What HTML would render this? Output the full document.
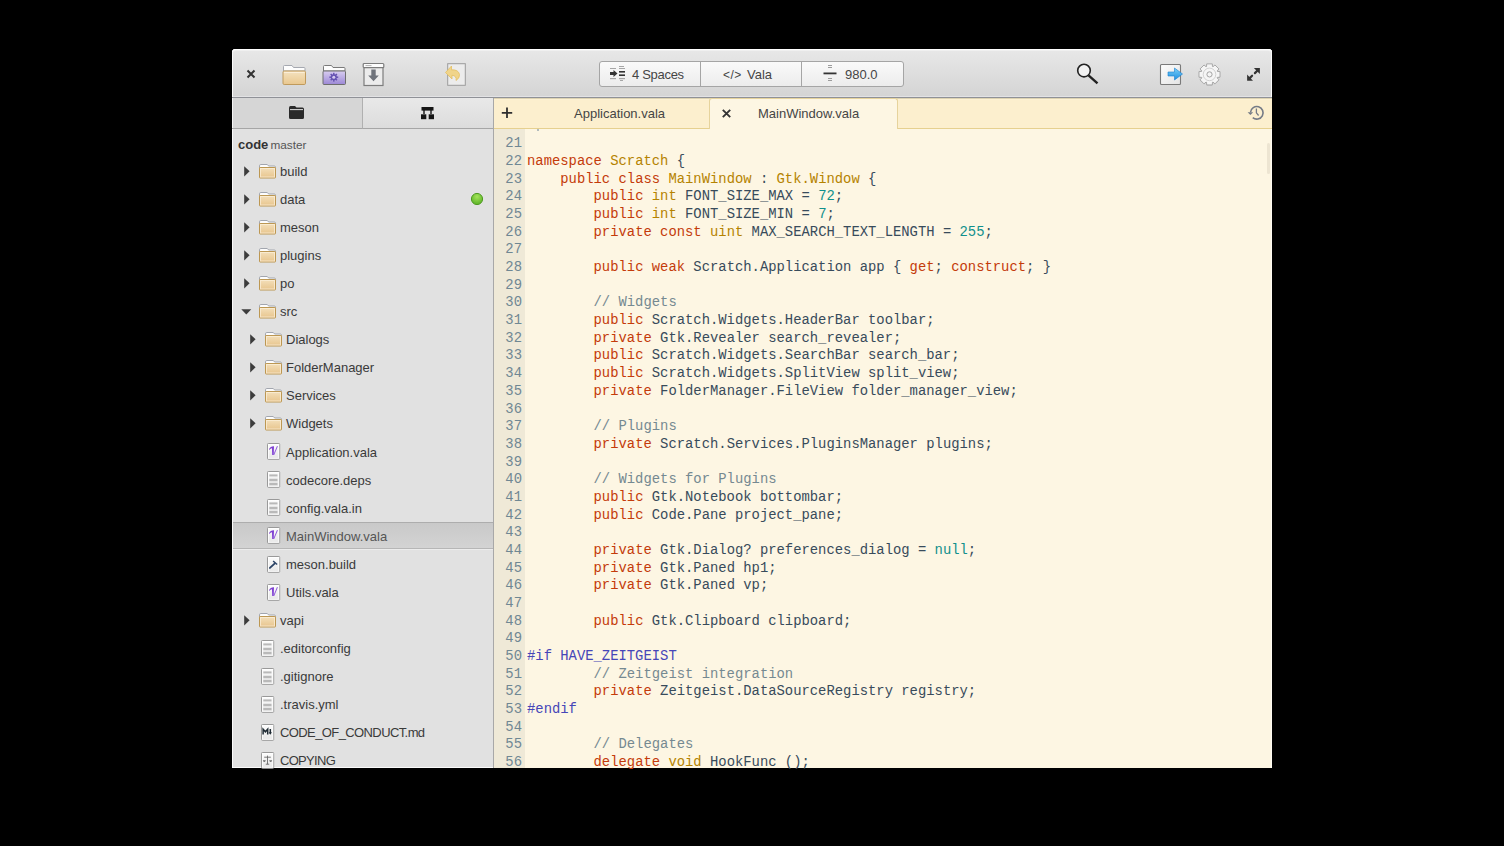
<!DOCTYPE html>
<html><head><meta charset="utf-8">
<style>
*{margin:0;padding:0;box-sizing:border-box}
html,body{width:1504px;height:846px;background:#000;overflow:hidden}
body{position:relative;font-family:"Liberation Sans",sans-serif;color:#333}
.abs{position:absolute}
#win{position:absolute;left:232px;top:49px;width:1040px;height:719px;border-radius:4px 4px 0 0;overflow:hidden;background:#e1e1e1}
#hb{position:absolute;left:232px;top:49px;width:1040px;height:49px;border-radius:4px 4px 0 0;background:linear-gradient(#e8e8e8,#d4d4d4);border-bottom:1px solid #8f9197;box-shadow:inset 0 1px 0 #fff, inset 0 2px 0 #f0f0f0, inset 1px 0 0 #fbfbfb, inset -1px 0 0 #fbfbfb, inset 0 -1px 0 #e2e2e4}
#side{position:absolute;left:232px;top:98px;width:262px;height:670px;background:#e1e1e1;border-right:1px solid #a8a8a8;box-shadow:inset 1px 0 0 #fbfbfb, inset 0 -1px 0 #fbfbfb}
#stab1{position:absolute;left:232px;top:98px;width:130px;height:31px;background:#d6d6d6;border-bottom:1px solid #a6a6a6;box-shadow:inset 1px 0 0 #f4f4f4}
#stab2{position:absolute;left:362px;top:98px;width:131px;height:31px;background:linear-gradient(#e9e9e9,#dcdcdc);border-bottom:1px solid #a6a6a6;border-left:1px solid #b0b0b0}
#editor{position:absolute;left:494px;top:98px;width:778px;height:670px;background:#fdf6e3}
#etabs{position:absolute;left:494px;top:98px;width:778px;height:31px;background:#fcefce;border-bottom:1px solid #e6d08f;box-shadow:inset 0 1px 0 #ddd3b2, inset 0 2px 0 #fdf1d3}
#atab{position:absolute;left:709px;top:98px;width:189px;height:31px;background:#fdf6e3;border:1px solid #e6d39c;border-bottom:none;border-radius:3px 3px 0 0}
#gutter{position:absolute;left:494px;top:129px;width:31px;height:639px;background:#efe9d7}
.cl{position:absolute;font-family:"Liberation Mono",monospace;font-size:13.86px;white-space:pre;line-height:17.68px;height:17.68px}
.ln{left:494px;width:28px;text-align:right;color:#6f8793}
.cd{left:527px}
.sl{font-size:13px;line-height:18px;white-space:nowrap;color:#3a3a3a}
.sel{color:#555}
.selrow{background:linear-gradient(#c9c9c9,#d3d3d3);border-top:1px solid #adadad;border-bottom:1px solid #b6b6b6;box-shadow:0 1px 0 #ececec}
.btn{position:absolute;top:61px;height:26px;background:linear-gradient(#fafafa,#ececec);border:1px solid #a5a5a5}
.bt{position:absolute;font-size:13px;line-height:16px;color:#454545;white-space:nowrap}
</style></head><body>
<svg width="0" height="0" style="position:absolute"><defs>
<linearGradient id="fgrad" x1="0" y1="0" x2="0" y2="1"><stop offset="0" stop-color="#f4e0bb"/><stop offset="1" stop-color="#e7c48c"/></linearGradient>
<linearGradient id="dgrad" x1="0" y1="0" x2="0" y2="1"><stop offset="0" stop-color="#fdfdfd"/><stop offset="1" stop-color="#e6e6e6"/></linearGradient>
</defs></svg>
<div id="win"></div>
<div id="hb"></div>
<div id="side"></div>
<div id="stab1"></div>
<div id="stab2"></div>
<div id="editor"></div>
<div id="etabs"></div>
<div id="atab"></div>
<div id="gutter"></div>

<!-- headerbar icons -->
<svg class="abs" style="left:246px;top:69px" width="10" height="10" viewBox="0 0 10 10"><path d="M1.5 1.5 L8.5 8.5 M8.5 1.5 L1.5 8.5" stroke="#333" stroke-width="2"/></svg>
<!-- open folder -->
<svg class="abs" style="left:282px;top:64px" width="25" height="22" viewBox="0 0 25 22">
<defs><linearGradient id="hf1" x1="0" y1="0" x2="0" y2="1"><stop offset="0" stop-color="#f4e2c0"/><stop offset="1" stop-color="#e9c78e"/></linearGradient></defs>
<path d="M1.5 7 V2.5 Q1.5 1.5 2.5 1.5 H10 L11.5 3.5 H22 Q23 3.5 23 4.5 V7Z" fill="#fdfdfd" stroke="#a5a8b0" stroke-width="1"/>
<rect x="1" y="7" width="22.5" height="13.5" rx="1.2" fill="url(#hf1)" stroke="#bf9a5c" stroke-width="1"/>
<rect x="2" y="8" width="20.5" height="1" fill="#fbeed8"/>
</svg>
<!-- purple project folder -->
<svg class="abs" style="left:322px;top:64px" width="25" height="22" viewBox="0 0 25 22">
<defs><linearGradient id="hf2" x1="0" y1="0" x2="0" y2="1"><stop offset="0" stop-color="#d8cdf0"/><stop offset="1" stop-color="#9c88d6"/></linearGradient></defs>
<path d="M1.5 7 V2.5 Q1.5 1.5 2.5 1.5 H9.5 L11 3.5 H22 Q23 3.5 23 4.5 V7Z" fill="#fdfdfd" stroke="#7a7a7a" stroke-width="1"/>
<rect x="1" y="7" width="22.5" height="13.5" rx="1" fill="url(#hf2)" stroke="#6e6e6e" stroke-width="1"/>
<g transform="translate(11.8,13.2)" fill="#6653b2"><circle r="3"/><rect x="-0.75" y="-4.4" width="1.5" height="8.8"/><rect x="-0.75" y="-4.4" width="1.5" height="8.8" transform="rotate(45)"/><rect x="-0.75" y="-4.4" width="1.5" height="8.8" transform="rotate(90)"/><rect x="-0.75" y="-4.4" width="1.5" height="8.8" transform="rotate(135)"/><circle r="1.5" fill="#d4c9ef"/></g>
</svg>
<!-- save -->
<svg class="abs" style="left:362px;top:62px" width="23" height="25" viewBox="0 0 23 25">
<rect x="2" y="4" width="19" height="19.5" fill="#ececec" stroke="#7d7d7d" stroke-width="1.2"/>
<rect x="1.2" y="1.5" width="20.6" height="4.2" rx="1" fill="#fdfdfd" stroke="#7d7d7d" stroke-width="1.2"/>
<path d="M3.5 3.6 H9.5" stroke="#9a9a9a" stroke-width="0.8"/>
<path d="M9.3 7.5 H13.7 V13.5 H16.8 L11.5 19.3 L6.2 13.5 H9.3Z" fill="#6f737b"/>
</svg>
<!-- revert (insensitive) -->
<svg class="abs" style="left:444px;top:62px" width="24" height="25" viewBox="0 0 24 25">
<rect x="3.7" y="1.7" width="17.6" height="21.6" fill="#ececec" stroke="#9c9c9c" stroke-width="1"/>
<path d="M1.5 10.5 L7.5 4 V7.8 Q14.5 7.5 15.5 12.5 Q16 16 12 18.5 Q13 14 8 13.2 V17Z" fill="#f0d48a" stroke="#e3bf62" stroke-width="0.8"/>
</svg>

<!-- linked buttons -->
<div class="btn" style="left:599px;width:102px;border-radius:3px 0 0 3px"></div>
<div class="btn" style="left:700px;width:102px;border-left:1px solid #a5a5a5"></div>
<div class="btn" style="left:801px;width:103px;border-radius:0 3px 3px 0"></div>
<svg class="abs" style="left:609px;top:65px" width="18" height="18" viewBox="0 0 18 18">
<g fill="#a6a6a6"><rect x="1" y="3" width="6" height="1"/><rect x="10" y="1" width="5" height="1"/><rect x="10" y="3" width="6" height="1"/><rect x="1" y="13" width="6" height="1.2"/><rect x="10" y="13" width="6" height="1.2"/><rect x="11" y="15" width="3" height="1"/></g>
<path d="M1 7 H4.5 V5 L8.5 8.5 L4.5 12 V10 H1Z" fill="#333"/>
<g fill="#333"><rect x="10" y="6" width="6" height="1.6"/><rect x="10" y="9.4" width="6" height="1.6"/></g>
</svg>
<div class="bt" style="left:632px;top:67px;letter-spacing:-0.3px">4 Spaces</div>
<div class="bt" style="left:723px;top:67px;font-size:12px;letter-spacing:0.5px">&lt;/&gt;</div>
<div class="bt" style="left:747px;top:67px">Vala</div>
<svg class="abs" style="left:823px;top:64px" width="14" height="20" viewBox="0 0 14 20">
<g fill="#9c9c9c"><rect x="5" y="1" width="4" height="1"/><rect x="5" y="3" width="4" height="1"/><rect x="5" y="14" width="4" height="1"/><rect x="5" y="16" width="4" height="1"/></g>
<rect x="0.5" y="8.5" width="13" height="1.8" fill="#333"/>
</svg>
<div class="bt" style="left:845px;top:67px">980.0</div>

<!-- search -->
<svg class="abs" style="left:1075px;top:62px" width="26" height="25" viewBox="0 0 26 25">
<circle cx="9" cy="8.6" r="6.3" fill="#f2f2f2" stroke="#222" stroke-width="1.6"/>
<path d="M13.5 13.3 L22.5 21.3" stroke="#222" stroke-width="2.4" stroke-linecap="butt"/>
</svg>
<!-- export -->
<svg class="abs" style="left:1159px;top:63px" width="26" height="23" viewBox="0 0 26 23">
<defs><linearGradient id="eg" x1="0" y1="0" x2="1" y2="1"><stop offset="0" stop-color="#fdfdfd"/><stop offset="1" stop-color="#e4e4e4"/></linearGradient>
<linearGradient id="ag" x1="0" y1="0" x2="0" y2="1"><stop offset="0" stop-color="#7ad0f8"/><stop offset="1" stop-color="#1f8fe0"/></linearGradient></defs>
<rect x="1.5" y="1.5" width="20" height="20" rx="1" fill="url(#eg)" stroke="#7a7a7a" stroke-width="1.1"/>
<path d="M9 9 H15.5 V5 L23.5 11 L15.5 17 V13 H9Z" fill="url(#ag)" stroke="#1a7fd0" stroke-width="0.6"/>
</svg>
<!-- gear -->
<svg class="abs" style="left:1197px;top:62px" width="25" height="26" viewBox="0 0 25 26">
<g transform="translate(12.5,12.4)">
<path d="M-2.96 -7.86 L-2.80 -10.53 L2.80 -10.53 L2.96 -7.86 L3.47 -7.65 L5.47 -9.43 L9.43 -5.47 L7.65 -3.47 L7.86 -2.96 L10.53 -2.80 L10.53 2.80 L7.86 2.96 L7.65 3.47 L9.43 5.47 L5.47 9.43 L3.47 7.65 L2.96 7.86 L2.80 10.53 L-2.80 10.53 L-2.96 7.86 L-3.47 7.65 L-5.47 9.43 L-9.43 5.47 L-7.65 3.47 L-7.86 2.96 L-10.53 2.80 L-10.53 -2.80 L-7.86 -2.96 L-7.65 -3.47 L-9.43 -5.47 L-5.47 -9.43 L-3.47 -7.65Z" fill="#000" fill-opacity="0.06" transform="translate(0,1)"/>
<path d="M-2.96 -7.86 L-2.80 -10.53 L2.80 -10.53 L2.96 -7.86 L3.47 -7.65 L5.47 -9.43 L9.43 -5.47 L7.65 -3.47 L7.86 -2.96 L10.53 -2.80 L10.53 2.80 L7.86 2.96 L7.65 3.47 L9.43 5.47 L5.47 9.43 L3.47 7.65 L2.96 7.86 L2.80 10.53 L-2.80 10.53 L-2.96 7.86 L-3.47 7.65 L-5.47 9.43 L-9.43 5.47 L-7.65 3.47 L-7.86 2.96 L-10.53 2.80 L-10.53 -2.80 L-7.86 -2.96 L-7.65 -3.47 L-9.43 -5.47 L-5.47 -9.43 L-3.47 -7.65Z" fill="#f5f5f5" stroke="#a2a2a2" stroke-width="0.9" stroke-linejoin="round"/>
<circle r="6.3" fill="none" stroke="#cdcdcd" stroke-width="0.9"/>
<circle r="2.6" fill="#f5f5f5" stroke="#9a9a9a" stroke-width="0.9"/>
</g>
</svg>
<!-- fullscreen -->
<svg class="abs" style="left:1244px;top:66px" width="18" height="18" viewBox="0 0 18 18">
<g fill="#333"><path d="M9.9 2.1 H15.9 V7.9Z"/><path d="M3.1 8.5 V14.75 H9Z"/></g>
<g stroke="#333" stroke-width="2.2" stroke-linecap="round"><path d="M13.3 4.7 L10.9 7.1"/><path d="M5.7 12.1 L8.1 9.7"/></g>
</svg>
<!-- sidebar tab icons -->
<svg class="abs" style="left:288px;top:105px" width="17" height="15" viewBox="0 0 17 15">
<path d="M1 3 Q1 1 2.5 1 H7 L8.5 2.5 H14.5 Q16 2.5 16 4 V12.5 Q16 14 14.5 14 H2.5 Q1 14 1 12.5Z" fill="#2a2a2a"/>
<rect x="2" y="4.2" width="13" height="0.9" fill="#f0f0f0"/>
</svg>
<svg class="abs" style="left:420px;top:106px" width="15" height="14" viewBox="0 0 15 14">
<g fill="#151515"><rect x="1.5" y="1" width="12" height="3.6"/><rect x="3.3" y="4" width="1.4" height="4"/><rect x="10.3" y="4" width="1.4" height="4"/><rect x="1" y="8.3" width="5.3" height="4.9"/><rect x="8.7" y="8.3" width="5.3" height="4.9"/></g>
</svg>

<!-- tabs -->
<svg class="abs" style="left:500px;top:106px" width="13" height="13" viewBox="0 0 13 13"><path d="M7 1.5 V12 M1.8 6.8 H12.2" stroke="#2f2f2f" stroke-width="1.8"/></svg>
<div class="bt" style="left:574px;top:106px">Application.vala</div>
<svg class="abs" style="left:721px;top:108px" width="11" height="11" viewBox="0 0 11 11"><path d="M1.8 1.8 L9.2 9.2 M9.2 1.8 L1.8 9.2" stroke="#333" stroke-width="1.9"/></svg>
<div class="bt" style="left:758px;top:106px">MainWindow.vala</div>
<!-- history -->
<svg class="abs" style="left:1244px;top:102px" width="22" height="20" viewBox="0 0 22 20">
<path d="M6.50 10.20 A6.3 6.3 0 1 1 8.75 15.63" fill="none" stroke="#757b86" stroke-width="1.6"/>
<path d="M3.60 10.20 L9.20 10.20 L6.40 13.00Z" fill="#757b86"/>
<path d="M12.40 6.40 V10.80 L14.60 13.50" fill="none" stroke="#757b86" stroke-width="1.3"/>
</svg>
<!-- scrollbar hint -->
<div class="abs" style="left:1267px;top:143px;width:3px;height:31px;background:#ede5d2;border-radius:2px"></div>
<div class="abs" style="left:1271px;top:129px;width:1px;height:639px;background:#fffcf3"></div>
<div class="abs" style="left:537px;top:129px;width:2px;height:2px;background:#9aa8b0;border-radius:1px"></div>

<!-- sidebar -->
<div class="abs sl" style="left:238px;top:135.5px"><b style="color:#333">code</b> <span style="font-size:11.8px;color:#555;margin-left:-1.5px">master</span></div>
<svg class="abs" style="left:244px;top:165.8px" width="7" height="11" viewBox="0 0 7 11"><path d="M0.2 0.2 L5.6 5.2 L0.2 10.4Z" fill="#3c3c3c"/></svg>
<svg class="abs" style="left:259px;top:164.0px" width="18" height="15" viewBox="0 0 18 15">
<path d="M0.5 4 V1.8 Q0.5 0.5 1.8 0.5 H8.3 L9.6 2 H15.3 Q16.5 2 16.5 3.2 V4" fill="#fdfdfd" stroke="#a2a6ae" stroke-width="1"/>
<rect x="0.5" y="3.5" width="16" height="10.5" rx="0.6" fill="url(#fgrad)" stroke="#bc9752" stroke-width="1"/>
<rect x="1.5" y="4.5" width="14" height="8.5" fill="none" stroke="#fbefd9" stroke-opacity="0.75" stroke-width="1"/>
</svg>
<div class="abs sl" style="left:280px;top:163.00px;">build</div>
<svg class="abs" style="left:244px;top:193.85000000000002px" width="7" height="11" viewBox="0 0 7 11"><path d="M0.2 0.2 L5.6 5.2 L0.2 10.4Z" fill="#3c3c3c"/></svg>
<svg class="abs" style="left:259px;top:192.05px" width="18" height="15" viewBox="0 0 18 15">
<path d="M0.5 4 V1.8 Q0.5 0.5 1.8 0.5 H8.3 L9.6 2 H15.3 Q16.5 2 16.5 3.2 V4" fill="#fdfdfd" stroke="#a2a6ae" stroke-width="1"/>
<rect x="0.5" y="3.5" width="16" height="10.5" rx="0.6" fill="url(#fgrad)" stroke="#bc9752" stroke-width="1"/>
<rect x="1.5" y="4.5" width="14" height="8.5" fill="none" stroke="#fbefd9" stroke-opacity="0.75" stroke-width="1"/>
</svg>
<div class="abs sl" style="left:280px;top:191.05px;">data</div>
<svg class="abs" style="left:244px;top:221.9px" width="7" height="11" viewBox="0 0 7 11"><path d="M0.2 0.2 L5.6 5.2 L0.2 10.4Z" fill="#3c3c3c"/></svg>
<svg class="abs" style="left:259px;top:220.1px" width="18" height="15" viewBox="0 0 18 15">
<path d="M0.5 4 V1.8 Q0.5 0.5 1.8 0.5 H8.3 L9.6 2 H15.3 Q16.5 2 16.5 3.2 V4" fill="#fdfdfd" stroke="#a2a6ae" stroke-width="1"/>
<rect x="0.5" y="3.5" width="16" height="10.5" rx="0.6" fill="url(#fgrad)" stroke="#bc9752" stroke-width="1"/>
<rect x="1.5" y="4.5" width="14" height="8.5" fill="none" stroke="#fbefd9" stroke-opacity="0.75" stroke-width="1"/>
</svg>
<div class="abs sl" style="left:280px;top:219.10px;">meson</div>
<svg class="abs" style="left:244px;top:249.95000000000002px" width="7" height="11" viewBox="0 0 7 11"><path d="M0.2 0.2 L5.6 5.2 L0.2 10.4Z" fill="#3c3c3c"/></svg>
<svg class="abs" style="left:259px;top:248.15px" width="18" height="15" viewBox="0 0 18 15">
<path d="M0.5 4 V1.8 Q0.5 0.5 1.8 0.5 H8.3 L9.6 2 H15.3 Q16.5 2 16.5 3.2 V4" fill="#fdfdfd" stroke="#a2a6ae" stroke-width="1"/>
<rect x="0.5" y="3.5" width="16" height="10.5" rx="0.6" fill="url(#fgrad)" stroke="#bc9752" stroke-width="1"/>
<rect x="1.5" y="4.5" width="14" height="8.5" fill="none" stroke="#fbefd9" stroke-opacity="0.75" stroke-width="1"/>
</svg>
<div class="abs sl" style="left:280px;top:247.15px;">plugins</div>
<svg class="abs" style="left:244px;top:278.0px" width="7" height="11" viewBox="0 0 7 11"><path d="M0.2 0.2 L5.6 5.2 L0.2 10.4Z" fill="#3c3c3c"/></svg>
<svg class="abs" style="left:259px;top:276.2px" width="18" height="15" viewBox="0 0 18 15">
<path d="M0.5 4 V1.8 Q0.5 0.5 1.8 0.5 H8.3 L9.6 2 H15.3 Q16.5 2 16.5 3.2 V4" fill="#fdfdfd" stroke="#a2a6ae" stroke-width="1"/>
<rect x="0.5" y="3.5" width="16" height="10.5" rx="0.6" fill="url(#fgrad)" stroke="#bc9752" stroke-width="1"/>
<rect x="1.5" y="4.5" width="14" height="8.5" fill="none" stroke="#fbefd9" stroke-opacity="0.75" stroke-width="1"/>
</svg>
<div class="abs sl" style="left:280px;top:275.20px;">po</div>
<svg class="abs" style="left:241.3px;top:309.05px" width="11" height="7" viewBox="0 0 11 7"><path d="M0.3 0.3 L10.3 0.3 L5.3 5.6Z" fill="#3c3c3c"/></svg>
<svg class="abs" style="left:259px;top:304.25px" width="18" height="15" viewBox="0 0 18 15">
<path d="M0.5 4 V1.8 Q0.5 0.5 1.8 0.5 H8.3 L9.6 2 H15.3 Q16.5 2 16.5 3.2 V4" fill="#fdfdfd" stroke="#a2a6ae" stroke-width="1"/>
<rect x="0.5" y="3.5" width="16" height="10.5" rx="0.6" fill="url(#fgrad)" stroke="#bc9752" stroke-width="1"/>
<rect x="1.5" y="4.5" width="14" height="8.5" fill="none" stroke="#fbefd9" stroke-opacity="0.75" stroke-width="1"/>
</svg>
<div class="abs sl" style="left:280px;top:303.25px;">src</div>
<svg class="abs" style="left:250px;top:334.1px" width="7" height="11" viewBox="0 0 7 11"><path d="M0.2 0.2 L5.6 5.2 L0.2 10.4Z" fill="#3c3c3c"/></svg>
<svg class="abs" style="left:265px;top:332.3px" width="18" height="15" viewBox="0 0 18 15">
<path d="M0.5 4 V1.8 Q0.5 0.5 1.8 0.5 H8.3 L9.6 2 H15.3 Q16.5 2 16.5 3.2 V4" fill="#fdfdfd" stroke="#a2a6ae" stroke-width="1"/>
<rect x="0.5" y="3.5" width="16" height="10.5" rx="0.6" fill="url(#fgrad)" stroke="#bc9752" stroke-width="1"/>
<rect x="1.5" y="4.5" width="14" height="8.5" fill="none" stroke="#fbefd9" stroke-opacity="0.75" stroke-width="1"/>
</svg>
<div class="abs sl" style="left:286px;top:331.30px;">Dialogs</div>
<svg class="abs" style="left:250px;top:362.15000000000003px" width="7" height="11" viewBox="0 0 7 11"><path d="M0.2 0.2 L5.6 5.2 L0.2 10.4Z" fill="#3c3c3c"/></svg>
<svg class="abs" style="left:265px;top:360.35px" width="18" height="15" viewBox="0 0 18 15">
<path d="M0.5 4 V1.8 Q0.5 0.5 1.8 0.5 H8.3 L9.6 2 H15.3 Q16.5 2 16.5 3.2 V4" fill="#fdfdfd" stroke="#a2a6ae" stroke-width="1"/>
<rect x="0.5" y="3.5" width="16" height="10.5" rx="0.6" fill="url(#fgrad)" stroke="#bc9752" stroke-width="1"/>
<rect x="1.5" y="4.5" width="14" height="8.5" fill="none" stroke="#fbefd9" stroke-opacity="0.75" stroke-width="1"/>
</svg>
<div class="abs sl" style="left:286px;top:359.35px;">FolderManager</div>
<svg class="abs" style="left:250px;top:390.2px" width="7" height="11" viewBox="0 0 7 11"><path d="M0.2 0.2 L5.6 5.2 L0.2 10.4Z" fill="#3c3c3c"/></svg>
<svg class="abs" style="left:265px;top:388.4px" width="18" height="15" viewBox="0 0 18 15">
<path d="M0.5 4 V1.8 Q0.5 0.5 1.8 0.5 H8.3 L9.6 2 H15.3 Q16.5 2 16.5 3.2 V4" fill="#fdfdfd" stroke="#a2a6ae" stroke-width="1"/>
<rect x="0.5" y="3.5" width="16" height="10.5" rx="0.6" fill="url(#fgrad)" stroke="#bc9752" stroke-width="1"/>
<rect x="1.5" y="4.5" width="14" height="8.5" fill="none" stroke="#fbefd9" stroke-opacity="0.75" stroke-width="1"/>
</svg>
<div class="abs sl" style="left:286px;top:387.40px;">Services</div>
<svg class="abs" style="left:250px;top:418.25000000000006px" width="7" height="11" viewBox="0 0 7 11"><path d="M0.2 0.2 L5.6 5.2 L0.2 10.4Z" fill="#3c3c3c"/></svg>
<svg class="abs" style="left:265px;top:416.45000000000005px" width="18" height="15" viewBox="0 0 18 15">
<path d="M0.5 4 V1.8 Q0.5 0.5 1.8 0.5 H8.3 L9.6 2 H15.3 Q16.5 2 16.5 3.2 V4" fill="#fdfdfd" stroke="#a2a6ae" stroke-width="1"/>
<rect x="0.5" y="3.5" width="16" height="10.5" rx="0.6" fill="url(#fgrad)" stroke="#bc9752" stroke-width="1"/>
<rect x="1.5" y="4.5" width="14" height="8.5" fill="none" stroke="#fbefd9" stroke-opacity="0.75" stroke-width="1"/>
</svg>
<div class="abs sl" style="left:286px;top:415.45px;">Widgets</div>
<svg class="abs" style="left:267px;top:443.3px" width="14" height="17" viewBox="0 0 14 17">
<rect x="0.5" y="0.5" width="12.2" height="15.8" rx="0.8" fill="url(#dgrad)" stroke="#999"/><rect x="1.5" y="1.5" width="10.2" height="13.8" fill="none" stroke="#fff" stroke-opacity="0.8"/><path d="M1.9 6.4 Q3.4 3.2 7 3.3 L6.7 11.9 L5.2 11.9 L5.0 5.2 Q3.8 5.0 2.4 6.8Z" fill="#7e3fd2"/><path d="M6.2 11.9 L10 3 L10.9 3.2 L7.2 11.9Z" fill="#8f55dc"/></svg>
<div class="abs sl" style="left:286px;top:443.50px;">Application.vala</div>
<svg class="abs" style="left:267px;top:471.35px" width="14" height="17" viewBox="0 0 14 17">
<rect x="0.5" y="0.5" width="12.2" height="15.8" rx="0.8" fill="url(#dgrad)" stroke="#999"/><rect x="1.5" y="1.5" width="10.2" height="13.8" fill="none" stroke="#fff" stroke-opacity="0.8"/><g fill="#b9b9b9"><rect x="2.3" y="3.4" width="8.2" height="2"/><rect x="2.3" y="7.8" width="8.2" height="2.4"/><rect x="2.3" y="11.9" width="8.2" height="2.3"/></g></svg>
<div class="abs sl" style="left:286px;top:471.55px;">codecore.deps</div>
<svg class="abs" style="left:267px;top:499.40000000000003px" width="14" height="17" viewBox="0 0 14 17">
<rect x="0.5" y="0.5" width="12.2" height="15.8" rx="0.8" fill="url(#dgrad)" stroke="#999"/><rect x="1.5" y="1.5" width="10.2" height="13.8" fill="none" stroke="#fff" stroke-opacity="0.8"/><g fill="#b9b9b9"><rect x="2.3" y="3.4" width="8.2" height="2"/><rect x="2.3" y="7.8" width="8.2" height="2.4"/><rect x="2.3" y="11.9" width="8.2" height="2.3"/></g></svg>
<div class="abs sl" style="left:286px;top:499.60px;">config.vala.in</div>
<div class="abs selrow" style="left:233px;top:522px;width:260px;height:27px"></div>
<svg class="abs" style="left:267px;top:527.45px" width="14" height="17" viewBox="0 0 14 17">
<rect x="0.5" y="0.5" width="12.2" height="15.8" rx="0.8" fill="url(#dgrad)" stroke="#999"/><rect x="1.5" y="1.5" width="10.2" height="13.8" fill="none" stroke="#fff" stroke-opacity="0.8"/><path d="M1.9 6.4 Q3.4 3.2 7 3.3 L6.7 11.9 L5.2 11.9 L5.0 5.2 Q3.8 5.0 2.4 6.8Z" fill="#7e3fd2"/><path d="M6.2 11.9 L10 3 L10.9 3.2 L7.2 11.9Z" fill="#8f55dc"/></svg>
<div class="abs sl sel" style="left:286px;top:527.65px;">MainWindow.vala</div>
<svg class="abs" style="left:267px;top:555.5px" width="14" height="17" viewBox="0 0 14 17">
<rect x="0.5" y="0.5" width="12.2" height="15.8" rx="0.8" fill="url(#dgrad)" stroke="#999"/><rect x="1.5" y="1.5" width="10.2" height="13.8" fill="none" stroke="#fff" stroke-opacity="0.8"/><path d="M2.9 11.9 L7.6 7.6" stroke="#2c4466" stroke-width="1.9" stroke-linecap="round"/><path d="M5.6 5.6 L6.6 4.6 L10.6 7.9 L9.6 8.9Z" fill="#2c4466"/></svg>
<div class="abs sl" style="left:286px;top:555.70px;">meson.build</div>
<svg class="abs" style="left:267px;top:583.55px" width="14" height="17" viewBox="0 0 14 17">
<rect x="0.5" y="0.5" width="12.2" height="15.8" rx="0.8" fill="url(#dgrad)" stroke="#999"/><rect x="1.5" y="1.5" width="10.2" height="13.8" fill="none" stroke="#fff" stroke-opacity="0.8"/><path d="M1.9 6.4 Q3.4 3.2 7 3.3 L6.7 11.9 L5.2 11.9 L5.0 5.2 Q3.8 5.0 2.4 6.8Z" fill="#7e3fd2"/><path d="M6.2 11.9 L10 3 L10.9 3.2 L7.2 11.9Z" fill="#8f55dc"/></svg>
<div class="abs sl" style="left:286px;top:583.75px;">Utils.vala</div>
<svg class="abs" style="left:244px;top:614.5999999999999px" width="7" height="11" viewBox="0 0 7 11"><path d="M0.2 0.2 L5.6 5.2 L0.2 10.4Z" fill="#3c3c3c"/></svg>
<svg class="abs" style="left:259px;top:612.8px" width="18" height="15" viewBox="0 0 18 15">
<path d="M0.5 4 V1.8 Q0.5 0.5 1.8 0.5 H8.3 L9.6 2 H15.3 Q16.5 2 16.5 3.2 V4" fill="#fdfdfd" stroke="#a2a6ae" stroke-width="1"/>
<rect x="0.5" y="3.5" width="16" height="10.5" rx="0.6" fill="url(#fgrad)" stroke="#bc9752" stroke-width="1"/>
<rect x="1.5" y="4.5" width="14" height="8.5" fill="none" stroke="#fbefd9" stroke-opacity="0.75" stroke-width="1"/>
</svg>
<div class="abs sl" style="left:280px;top:611.80px;">vapi</div>
<svg class="abs" style="left:261px;top:639.65px" width="14" height="17" viewBox="0 0 14 17">
<rect x="0.5" y="0.5" width="12.2" height="15.8" rx="0.8" fill="url(#dgrad)" stroke="#999"/><rect x="1.5" y="1.5" width="10.2" height="13.8" fill="none" stroke="#fff" stroke-opacity="0.8"/><g fill="#b9b9b9"><rect x="2.3" y="3.4" width="8.2" height="2"/><rect x="2.3" y="7.8" width="8.2" height="2.4"/><rect x="2.3" y="11.9" width="8.2" height="2.3"/></g></svg>
<div class="abs sl" style="left:280px;top:639.85px;">.editorconfig</div>
<svg class="abs" style="left:261px;top:667.7px" width="14" height="17" viewBox="0 0 14 17">
<rect x="0.5" y="0.5" width="12.2" height="15.8" rx="0.8" fill="url(#dgrad)" stroke="#999"/><rect x="1.5" y="1.5" width="10.2" height="13.8" fill="none" stroke="#fff" stroke-opacity="0.8"/><g fill="#b9b9b9"><rect x="2.3" y="3.4" width="8.2" height="2"/><rect x="2.3" y="7.8" width="8.2" height="2.4"/><rect x="2.3" y="11.9" width="8.2" height="2.3"/></g></svg>
<div class="abs sl" style="left:280px;top:667.90px;">.gitignore</div>
<svg class="abs" style="left:261px;top:695.75px" width="14" height="17" viewBox="0 0 14 17">
<rect x="0.5" y="0.5" width="12.2" height="15.8" rx="0.8" fill="url(#dgrad)" stroke="#999"/><rect x="1.5" y="1.5" width="10.2" height="13.8" fill="none" stroke="#fff" stroke-opacity="0.8"/><g fill="#b9b9b9"><rect x="2.3" y="3.4" width="8.2" height="2"/><rect x="2.3" y="7.8" width="8.2" height="2.4"/><rect x="2.3" y="11.9" width="8.2" height="2.3"/></g></svg>
<div class="abs sl" style="left:280px;top:695.95px;">.travis.yml</div>
<svg class="abs" style="left:261px;top:723.8px" width="14" height="17" viewBox="0 0 14 17">
<rect x="0.5" y="0.5" width="12.2" height="15.8" rx="0.8" fill="url(#dgrad)" stroke="#999"/><rect x="1.5" y="1.5" width="10.2" height="13.8" fill="none" stroke="#fff" stroke-opacity="0.8"/><path d="M2.1 10.6 V5.2 L4.4 7.8 L6.7 5.2 V10.6" fill="none" stroke="#1e2a33" stroke-width="1.5"/><path d="M9.3 5 V9.6" stroke="#1e2a33" stroke-width="1.5"/><path d="M7.7 8.3 L9.3 10.8 L10.9 8.3Z" fill="#1e2a33"/></svg>
<div class="abs sl" style="left:280px;top:724.00px;letter-spacing:-0.6px;">CODE_OF_CONDUCT.md</div>
<svg class="abs" style="left:261px;top:751.85px" width="14" height="17" viewBox="0 0 14 17">
<rect x="0.5" y="0.5" width="12.2" height="15.8" rx="0.8" fill="url(#dgrad)" stroke="#999"/><rect x="1.5" y="1.5" width="10.2" height="13.8" fill="none" stroke="#fff" stroke-opacity="0.8"/><g stroke="#6a6a6a" stroke-width="0.9" fill="none"><path d="M6.5 3.6 V12.2 M3.2 5.2 H9.8 M4.8 12.2 H8.2"/></g><g fill="#6a6a6a"><path d="M1.8 8.3 H4.8 Q4.5 10 3.3 10 Q2.1 10 1.8 8.3Z"/><path d="M8.2 8.3 H11.2 Q10.9 10 9.7 10 Q8.5 10 8.2 8.3Z"/></g></svg>
<div class="abs sl" style="left:280px;top:752.05px;letter-spacing:-0.7px;">COPYING</div>
<svg class="abs" style="left:470px;top:192px" width="14" height="14" viewBox="0 0 14 14">
<defs><radialGradient id="gd" cx="0.5" cy="0.3" r="0.6"><stop offset="0" stop-color="#a4e45a"/><stop offset="1" stop-color="#64b82c"/></radialGradient></defs>
<circle cx="7" cy="7" r="5.6" fill="url(#gd)" stroke="#4f9a22" stroke-width="1"/>
</svg>

<div class="cl ln" style="top:135.30px">21</div>
<div class="cl ln" style="top:152.98px">22</div>
<div class="cl cd" style="top:152.98px"><span style="color:#c43b0a">namespace</span><span style="color:#384b5b"> </span><span style="color:#b58300">Scratch</span><span style="color:#384b5b"> {</span></div>
<div class="cl ln" style="top:170.66px">23</div>
<div class="cl cd" style="top:170.66px"><span style="color:#384b5b">    </span><span style="color:#c43b0a">public class</span><span style="color:#384b5b"> </span><span style="color:#b58300">MainWindow</span><span style="color:#384b5b"> : </span><span style="color:#b58300">Gtk.Window</span><span style="color:#384b5b"> {</span></div>
<div class="cl ln" style="top:188.34px">24</div>
<div class="cl cd" style="top:188.34px"><span style="color:#384b5b">        </span><span style="color:#c43b0a">public</span><span style="color:#384b5b"> </span><span style="color:#b58300">int</span><span style="color:#384b5b"> FONT_SIZE_MAX = </span><span style="color:#10908c">72</span><span style="color:#384b5b">;</span></div>
<div class="cl ln" style="top:206.02px">25</div>
<div class="cl cd" style="top:206.02px"><span style="color:#384b5b">        </span><span style="color:#c43b0a">public</span><span style="color:#384b5b"> </span><span style="color:#b58300">int</span><span style="color:#384b5b"> FONT_SIZE_MIN = </span><span style="color:#10908c">7</span><span style="color:#384b5b">;</span></div>
<div class="cl ln" style="top:223.70px">26</div>
<div class="cl cd" style="top:223.70px"><span style="color:#384b5b">        </span><span style="color:#c43b0a">private const</span><span style="color:#384b5b"> </span><span style="color:#b58300">uint</span><span style="color:#384b5b"> MAX_SEARCH_TEXT_LENGTH = </span><span style="color:#10908c">255</span><span style="color:#384b5b">;</span></div>
<div class="cl ln" style="top:241.38px">27</div>
<div class="cl ln" style="top:259.06px">28</div>
<div class="cl cd" style="top:259.06px"><span style="color:#384b5b">        </span><span style="color:#c43b0a">public weak</span><span style="color:#384b5b"> Scratch.Application app { </span><span style="color:#c43b0a">get</span><span style="color:#384b5b">; </span><span style="color:#c43b0a">construct</span><span style="color:#384b5b">; }</span></div>
<div class="cl ln" style="top:276.74px">29</div>
<div class="cl ln" style="top:294.42px">30</div>
<div class="cl cd" style="top:294.42px"><span style="color:#758991">        // Widgets</span></div>
<div class="cl ln" style="top:312.10px">31</div>
<div class="cl cd" style="top:312.10px"><span style="color:#384b5b">        </span><span style="color:#c43b0a">public</span><span style="color:#384b5b"> Scratch.Widgets.HeaderBar toolbar;</span></div>
<div class="cl ln" style="top:329.78px">32</div>
<div class="cl cd" style="top:329.78px"><span style="color:#384b5b">        </span><span style="color:#c43b0a">private</span><span style="color:#384b5b"> Gtk.Revealer search_revealer;</span></div>
<div class="cl ln" style="top:347.46px">33</div>
<div class="cl cd" style="top:347.46px"><span style="color:#384b5b">        </span><span style="color:#c43b0a">public</span><span style="color:#384b5b"> Scratch.Widgets.SearchBar search_bar;</span></div>
<div class="cl ln" style="top:365.14px">34</div>
<div class="cl cd" style="top:365.14px"><span style="color:#384b5b">        </span><span style="color:#c43b0a">public</span><span style="color:#384b5b"> Scratch.Widgets.SplitView split_view;</span></div>
<div class="cl ln" style="top:382.82px">35</div>
<div class="cl cd" style="top:382.82px"><span style="color:#384b5b">        </span><span style="color:#c43b0a">private</span><span style="color:#384b5b"> FolderManager.FileView folder_manager_view;</span></div>
<div class="cl ln" style="top:400.50px">36</div>
<div class="cl ln" style="top:418.18px">37</div>
<div class="cl cd" style="top:418.18px"><span style="color:#758991">        // Plugins</span></div>
<div class="cl ln" style="top:435.86px">38</div>
<div class="cl cd" style="top:435.86px"><span style="color:#384b5b">        </span><span style="color:#c43b0a">private</span><span style="color:#384b5b"> Scratch.Services.PluginsManager plugins;</span></div>
<div class="cl ln" style="top:453.54px">39</div>
<div class="cl ln" style="top:471.22px">40</div>
<div class="cl cd" style="top:471.22px"><span style="color:#758991">        // Widgets for Plugins</span></div>
<div class="cl ln" style="top:488.90px">41</div>
<div class="cl cd" style="top:488.90px"><span style="color:#384b5b">        </span><span style="color:#c43b0a">public</span><span style="color:#384b5b"> Gtk.Notebook bottombar;</span></div>
<div class="cl ln" style="top:506.58px">42</div>
<div class="cl cd" style="top:506.58px"><span style="color:#384b5b">        </span><span style="color:#c43b0a">public</span><span style="color:#384b5b"> Code.Pane project_pane;</span></div>
<div class="cl ln" style="top:524.26px">43</div>
<div class="cl ln" style="top:541.94px">44</div>
<div class="cl cd" style="top:541.94px"><span style="color:#384b5b">        </span><span style="color:#c43b0a">private</span><span style="color:#384b5b"> Gtk.Dialog? preferences_dialog = </span><span style="color:#10908c">null</span><span style="color:#384b5b">;</span></div>
<div class="cl ln" style="top:559.62px">45</div>
<div class="cl cd" style="top:559.62px"><span style="color:#384b5b">        </span><span style="color:#c43b0a">private</span><span style="color:#384b5b"> Gtk.Paned hp1;</span></div>
<div class="cl ln" style="top:577.30px">46</div>
<div class="cl cd" style="top:577.30px"><span style="color:#384b5b">        </span><span style="color:#c43b0a">private</span><span style="color:#384b5b"> Gtk.Paned vp;</span></div>
<div class="cl ln" style="top:594.98px">47</div>
<div class="cl ln" style="top:612.66px">48</div>
<div class="cl cd" style="top:612.66px"><span style="color:#384b5b">        </span><span style="color:#c43b0a">public</span><span style="color:#384b5b"> Gtk.Clipboard clipboard;</span></div>
<div class="cl ln" style="top:630.34px">49</div>
<div class="cl ln" style="top:648.02px">50</div>
<div class="cl cd" style="top:648.02px"><span style="color:#4646b8">#if HAVE_ZEITGEIST</span></div>
<div class="cl ln" style="top:665.70px">51</div>
<div class="cl cd" style="top:665.70px"><span style="color:#758991">        // Zeitgeist integration</span></div>
<div class="cl ln" style="top:683.38px">52</div>
<div class="cl cd" style="top:683.38px"><span style="color:#384b5b">        </span><span style="color:#c43b0a">private</span><span style="color:#384b5b"> Zeitgeist.DataSourceRegistry registry;</span></div>
<div class="cl ln" style="top:701.06px">53</div>
<div class="cl cd" style="top:701.06px"><span style="color:#4646b8">#endif</span></div>
<div class="cl ln" style="top:718.74px">54</div>
<div class="cl ln" style="top:736.42px">55</div>
<div class="cl cd" style="top:736.42px"><span style="color:#758991">        // Delegates</span></div>
<div class="cl ln" style="top:754.10px">56</div>
<div class="cl cd" style="top:754.10px"><span style="color:#384b5b">        </span><span style="color:#c43b0a">delegate</span><span style="color:#384b5b"> </span><span style="color:#b58300">void</span><span style="color:#384b5b"> HookFunc ();</span></div>
</body></html>
